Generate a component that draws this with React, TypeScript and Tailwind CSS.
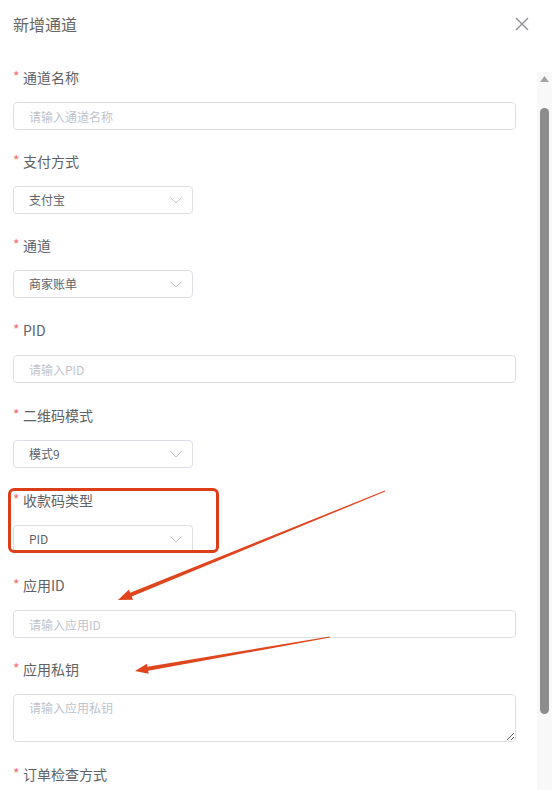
import React from 'react';

const font = { fontFamily: '"Noto Sans CJK SC", "Noto Sans", sans-serif' };

const Label: React.FC<{ text: string }> = ({ text }) => (
  <div className="h-[20px] flex items-center text-[14px] text-[#606266] leading-[20px]">
    <span className="text-[#f56c6c] w-[10px] -mt-[3px]">*</span>
    <span>{text}</span>
  </div>
);

const Chevron = () => (
  <svg width="12" height="7" viewBox="0 0 12 7" fill="none">
    <polyline points="0.5,0.5 6,6 11.5,0.5" stroke="#c0c4cc" strokeWidth="1" />
  </svg>
);

const TextField: React.FC<{ placeholder: string }> = ({ placeholder }) => (
  <input
    readOnly
    placeholder={placeholder}
    className="w-full h-[28px] border border-[#dcdfe6] rounded-[4px] px-[15px] text-[12px] text-[#606266] placeholder:text-[#c0c4cc] outline-none"
  />
);

const Select: React.FC<{ value: string }> = ({ value }) => (
  <div className="w-[180px] h-[28px] border border-[#dcdfe6] rounded-[4px] pl-[15px] pr-[10px] flex items-center justify-between text-[12px] text-[#606266] bg-white">
    <span>{value}</span>
    <Chevron />
  </div>
);

// annotation arrow: thin tail widening to a head at the tip
function arrowPoints(tx: number, ty: number, px: number, py: number, head = 14, wing = 5.5) {
  const dx = px - tx;
  const dy = py - ty;
  const len = Math.hypot(dx, dy);
  const ux = dx / len;
  const uy = dy / len;
  const nx = -uy;
  const ny = ux;
  const bx = px - ux * head;
  const by = py - uy * head;
  const pts = [
    [tx + nx * 0.5, ty + ny * 0.5],
    [bx + nx * 2, by + ny * 2],
    [bx + nx * wing, by + ny * wing],
    [px, py],
    [bx - nx * wing, by - ny * wing],
    [bx - nx * 2, by - ny * 2],
    [tx - nx * 0.5, ty - ny * 0.5],
  ];
  return pts.map((p) => p.join(',')).join(' ');
}

const App: React.FC = () => {
  return (
    <div className="relative w-full h-[790px] overflow-hidden bg-white flex flex-col" style={font}>
      {/* header */}
      <div className="h-[66px] shrink-0 flex items-start justify-between pl-[13px] pr-[23px] pt-[12px]">
        <span className="text-[16px] text-[#666] leading-[24px]">新增通道</span>
        <svg width="14" height="14" viewBox="0 0 14 14" className="mt-[5px]">
          <path d="M1 1 L13 13 M13 1 L1 13" stroke="#8a8d93" strokeWidth="1.3" />
        </svg>
      </div>

      {/* body */}
      <div className="flex flex-1 min-h-0">
        <div className="flex-1 pl-[13px] pr-[21px] pt-[1px] flex flex-col overflow-hidden">
          <div className="flex flex-col gap-[15px]">
            <Label text="通道名称" />
            <TextField placeholder="请输入通道名称" />
          </div>
          <div className="mt-[21px] flex flex-col gap-[15px]">
            <Label text="支付方式" />
            <Select value="支付宝" />
          </div>
          <div className="mt-[21px] flex flex-col gap-[15px]">
            <Label text="通道" />
            <Select value="商家账单" />
          </div>
          <div className="mt-[22px] flex flex-col gap-[15px]">
            <Label text="PID" />
            <TextField placeholder="请输入PID" />
          </div>
          <div className="mt-[22px] flex flex-col gap-[15px]">
            <Label text="二维码模式" />
            <Select value="模式9" />
          </div>
          <div className="relative mt-[22px] flex flex-col gap-[15px]">
            <Label text="收款码类型" />
            <Select value="PID" />
            <div className="absolute -top-[2px] -left-[5px] w-[211px] h-[65px] border-[3px] border-[#dc3f18] rounded-[6px]" />
          </div>
          <div className="mt-[22px] flex flex-col gap-[15px]">
            <Label text="应用ID" />
            <TextField placeholder="请输入应用ID" />
          </div>
          <div className="mt-[21px] flex flex-col gap-[15px]">
            <Label text="应用私钥" />
            <textarea
              readOnly
              placeholder="请输入应用私钥"
              className="w-full h-[48px] border border-[#dcdfe6] rounded-[4px] px-[15px] py-[4px] text-[12px] leading-[18px] text-[#606266] placeholder:text-[#c0c4cc] outline-none resize-y block"
            />
          </div>
          <div className="mt-[22px] flex flex-col gap-[15px]">
            <Label text="订单检查方式" />
            <Select value="" />
          </div>
        </div>

        {/* scrollbar */}
        <div className="w-[15px] shrink-0 mt-[6px] bg-[#f8f8f8] flex flex-col items-center pt-[4px]">
          <svg width="9" height="6" viewBox="0 0 9 6">
            <polygon points="4.5,0 9,6 0,6" fill="#a3a3a3" />
          </svg>
          <div className="mt-[26px] w-[9px] h-[606px] rounded-full bg-[#8c8c8c]" />
        </div>
      </div>

      {/* annotation arrows */}
      <svg className="absolute inset-0 pointer-events-none" width="552" height="790">
        <polygon points={arrowPoints(385, 491, 118, 600)} fill="#e0461e" />
        <polygon points={arrowPoints(330, 637, 135, 671, 13, 5)} fill="#e0461e" />
      </svg>
    </div>
  );
};

export default App;
